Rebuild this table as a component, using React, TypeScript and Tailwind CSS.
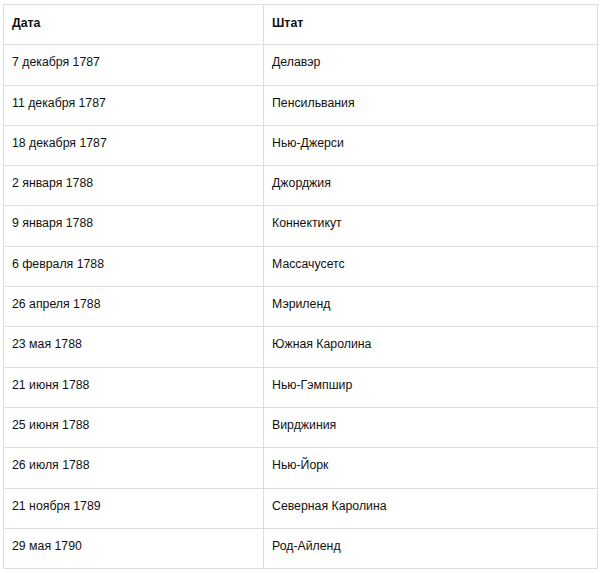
import React from "react";

const rows: [string, string][] = [
  ["7 декабря 1787", "Делавэр"],
  ["11 декабря 1787", "Пенсильвания"],
  ["18 декабря 1787", "Нью-Джерси"],
  ["2 января 1788", "Джорджия"],
  ["9 января 1788", "Коннектикут"],
  ["6 февраля 1788", "Массачусетс"],
  ["26 апреля 1788", "Мэриленд"],
  ["23 мая 1788", "Южная Каролина"],
  ["21 июня 1788", "Нью-Гэмпшир"],
  ["25 июня 1788", "Вирджиния"],
  ["26 июля 1788", "Нью-Йорк"],
  ["21 ноября 1789", "Северная Каролина"],
  ["29 мая 1790", "Род-Айленд"],
];

export default function App() {
  return (
    <div className="w-[600px] h-[573px] bg-white pt-[4px] pl-[3px] font-['Liberation_Sans',Arial,sans-serif] text-[12.3px] text-[#111]">
      <table className="border-collapse w-[595px] table-fixed">
        <colgroup>
          <col className="w-[260px]" />
          <col />
        </colgroup>
        <thead>
          <tr className="h-[40.3px]">
            <th className="border border-[#dedede] text-left align-top pt-[11px] pl-[8px] font-bold leading-[14px]">
              Дата
            </th>
            <th className="border border-[#dedede] text-left align-top pt-[11px] pl-[8px] font-bold leading-[14px]">
              Штат
            </th>
          </tr>
        </thead>
        <tbody>
          {rows.map(([d, s]) => (
            <tr key={d} className="h-[40.3px]">
              <td className="border border-[#dedede] align-top pt-[10px] pl-[8px] leading-[14px]">{d}</td>
              <td className="border border-[#dedede] align-top pt-[10px] pl-[8px] leading-[14px]">{s}</td>
            </tr>
          ))}
        </tbody>
      </table>
    </div>
  );
}
